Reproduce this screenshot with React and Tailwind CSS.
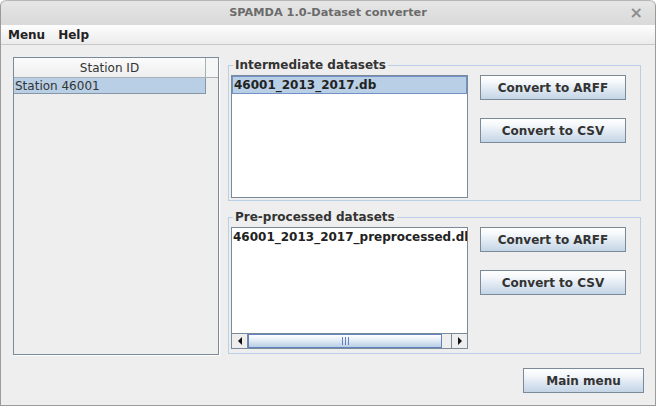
import React from "react";

function Btn({ children, className = "" }) {
  return (
    <div
      className={
        "h-[25px] border border-[#7a8a99] bg-[linear-gradient(to_bottom,#ffffff_0%,#f3f6fa_30%,#dde7f1_60%,#c4d5e6_100%)] flex items-center justify-center font-bold text-[12px] text-[#333333] " +
        className
      }
    >
      {children}
    </div>
  );
}

function Scrollbar() {
  return (
    <div className="h-[15px] flex border-t border-[#7a8a99] bg-[#eeeeee]">
      <div className="w-[16px] border-r border-[#7a8a99] flex items-center justify-center">
        <div className="w-0 h-0 border-y-[4px] border-y-transparent border-r-[4px] border-r-[#111111]" />
      </div>
      <div className="w-[194px] border border-[#6382bf] bg-[linear-gradient(to_bottom,#ffffff_0%,#e6eef7_40%,#b8cfe5_100%)] flex items-center justify-center gap-[2px]">
        <div className="w-[1px] h-[8px] bg-[#6382bf]" />
        <div className="w-[1px] h-[8px] bg-[#6382bf]" />
        <div className="w-[1px] h-[8px] bg-[#6382bf]" />
      </div>
      <div className="w-[9px]" />
      <div className="flex-1 border-l border-[#7a8a99] flex items-center justify-center">
        <div className="w-0 h-0 border-y-[4px] border-y-transparent border-l-[4px] border-l-[#111111]" />
      </div>
    </div>
  );
}

function Group({ title, h, list, top, className = "" }) {
  return (
    <div className={"relative border border-[#b8cfe5] " + className} style={{ height: h }}>
      <span className="absolute left-[4px] top-[-9px] px-[2px] bg-[#eeeeee] font-bold text-[12px] leading-[16px] text-[#333333]">
        {title}
      </span>
      <div className="flex pl-[2px] pt-[9px]">
        {list}
        <div className="ml-[12px] w-[146px] flex flex-col">
          <Btn>Convert to ARFF</Btn>
          <Btn className={top}>Convert to CSV</Btn>
        </div>
      </div>
    </div>
  );
}

export default function App() {
  return (
    <div className="w-[656px] h-[406px] flex flex-col bg-[#eeeeee] font-['DejaVu_Sans',sans-serif] text-[12px] text-[#333333] overflow-hidden border-x border-b border-[#9a9a9a] rounded-t-[6px]">
      {/* title bar */}
      <div className="h-[25px] shrink-0 relative flex items-center justify-center bg-[linear-gradient(to_bottom,#e6e6e6,#d9d9d9)] border-t border-[#b5b5b5] rounded-t-[6px]">
        <span className="font-bold text-[11.3px] text-[#6b6b6b]">SPAMDA 1.0-Dataset converter</span>
        <span className="absolute right-[12px] top-[2px] text-[16px] leading-[20px] font-bold text-[#8c8c8c]">×</span>
      </div>
      {/* menu bar */}
      <div className="h-[20px] shrink-0 flex items-center pl-[7px] gap-[13px] bg-[linear-gradient(to_bottom,#fdfdfd,#ebebeb)] border-b border-[#c8c8c8] font-bold text-[12px] text-[#222222]">
        <span>Menu</span>
        <span>Help</span>
      </div>
      {/* body */}
      <div className="flex flex-col">
        <div className="flex pl-[12px] pt-[12px]">
          {/* left table pane */}
          <div className="w-[206px] h-[298px] border border-[#7a8a99] shadow-[1px_1px_0_#ffffff] bg-[#eeeeee] flex flex-col">
            <div className="flex h-[20px] bg-[linear-gradient(to_bottom,#fbfbfb,#eeeeee)] border-b border-[#a8b0b8]">
              <div className="w-[192px] border-r border-[#a8b0b8] flex items-center justify-center text-[12px] text-[#333333]">
                Station ID
              </div>
              <div className="flex-1 bg-[#f6f6f6]" />
            </div>
            <div className="w-[192px] h-[16px] bg-[#b8cfe5] border-r border-b border-[#8796a6] flex items-center pl-[1px] text-[12px] text-[#333333]">
              Station 46001
            </div>
          </div>
          {/* right column */}
          <div className="ml-[9px] w-[413px] flex flex-col">
            <Group
              className="mt-[8px]"
              h={136}
              top="mt-[18px]"
              title="Intermediate datasets"
              list={
                <div className="w-[237px] h-[123px] border border-[#7a8a99] bg-white">
                  <div className="h-[18px] bg-[#b8cfe5] border border-[#7391c7] flex items-center pl-[1px] font-bold text-[12px] text-[#222222] whitespace-nowrap">
                    46001_2013_2017.db
                  </div>
                </div>
              }
            />
            <Group
              className="mt-[16px]"
              h={137}
              top="mt-[18px]"
              title="Pre-processed datasets"
              list={
                <div className="w-[237px] h-[122px] border border-[#7a8a99] bg-white flex flex-col">
                  <div className="h-[18px] flex items-center pl-[1px] font-bold text-[12px] text-[#222222] whitespace-nowrap overflow-hidden">
                    46001_2013_2017_preprocessed.db
                  </div>
                  <div className="flex-1" />
                  <Scrollbar />
                </div>
              }
            />
          </div>
        </div>
        <div className="flex justify-end pr-[11px] mt-[13px]">
          <Btn className="w-[121px]">Main menu</Btn>
        </div>
      </div>
    </div>
  );
}
